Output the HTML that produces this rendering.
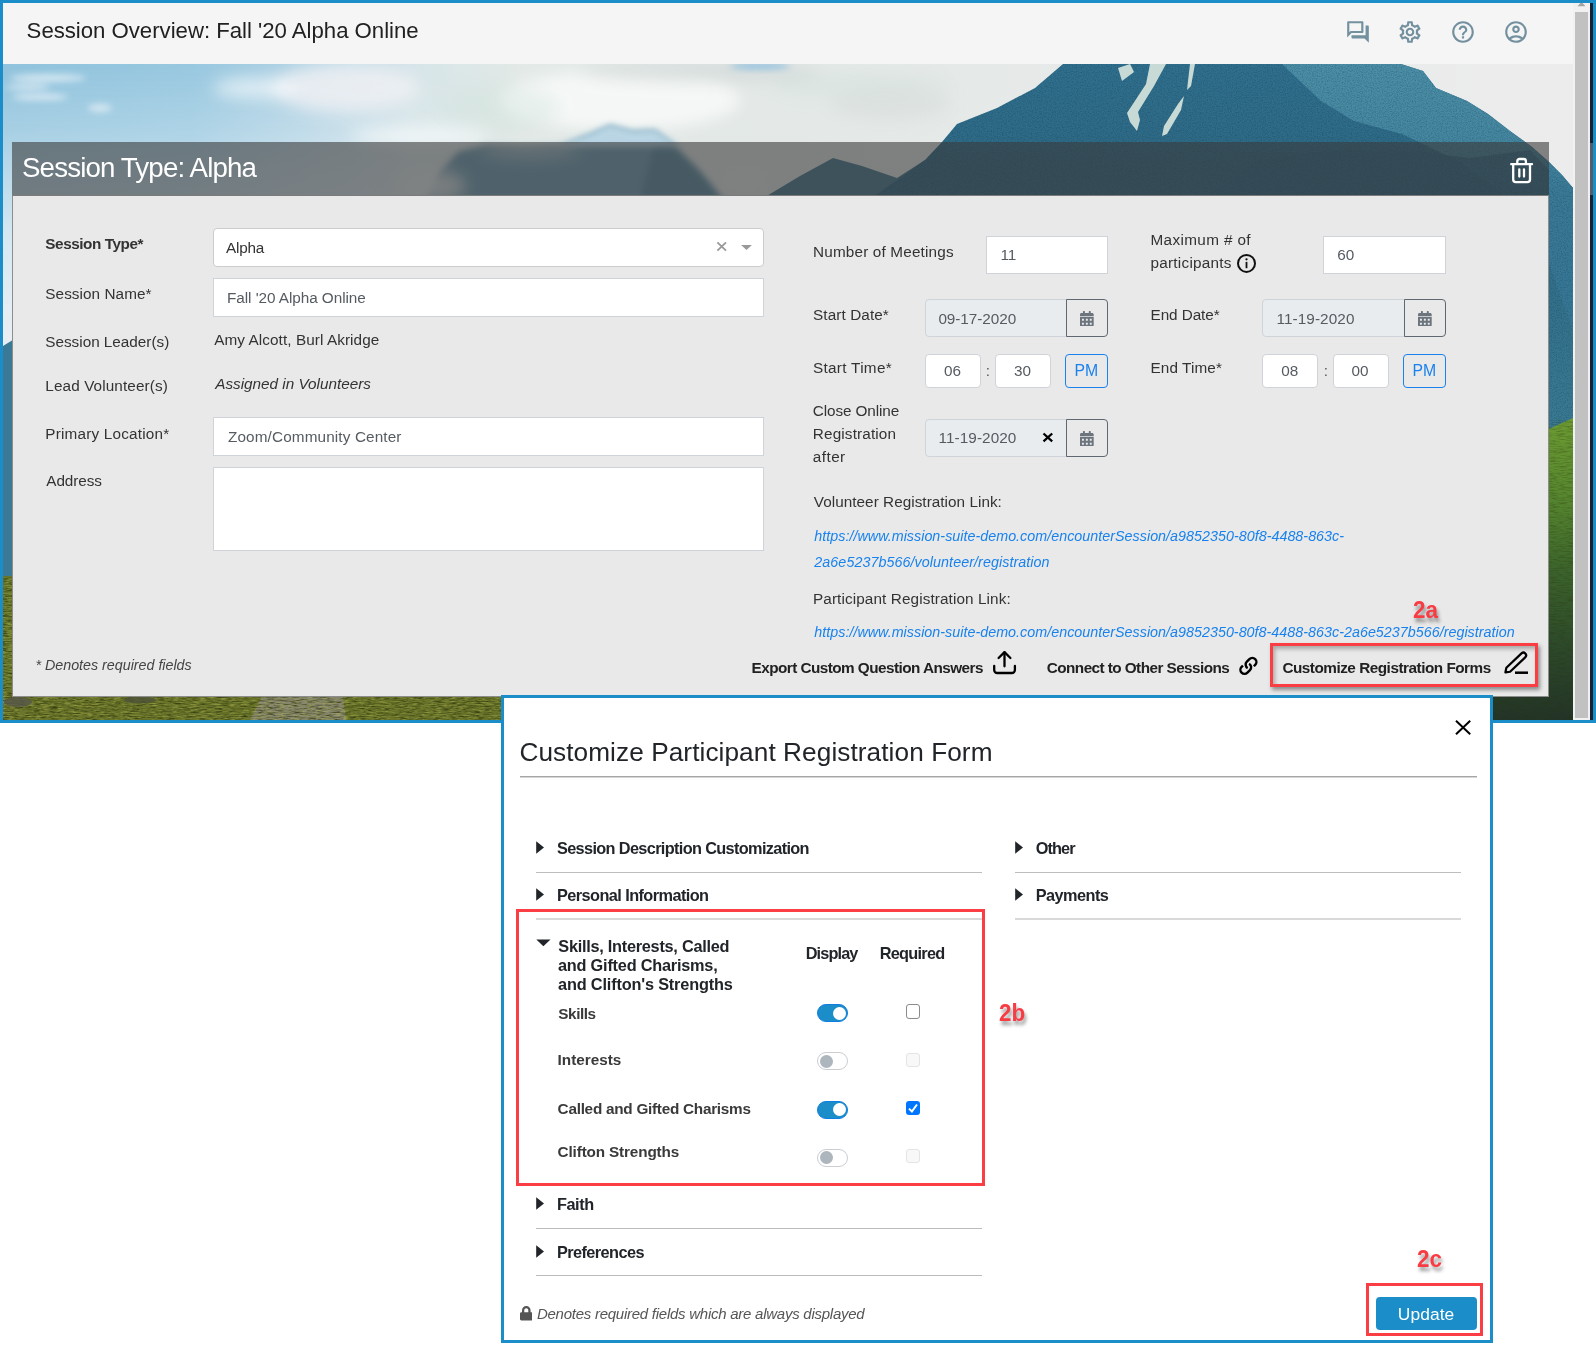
<!DOCTYPE html>
<html lang="en">
<head>
<meta charset="utf-8">
<title>Session Overview: Fall '20 Alpha Online</title>
<style>
html,body{margin:0;padding:0}
body{width:1596px;height:1347px;position:relative;overflow:hidden;background:#fff;font-family:"Liberation Sans",sans-serif}
.a,.t,.bx,svg.i{position:absolute}
.t{white-space:nowrap;line-height:normal;margin:0}
.ann{text-shadow:2px 4px 4px rgba(0,0,0,.4);transform:scaleX(.92);transform-origin:0 0}
.bx{box-sizing:border-box;background:#fff;border:1px solid #ced4da;border-radius:4px}
.sq{border-radius:0}
.ro{background:#e9ecef;border-radius:4px 0 0 4px}
.cal{background:transparent;border:1px solid #5f6870;border-radius:0 4px 4px 0}
.pm{background:transparent;border:1px solid #1a82ee;border-radius:4px}
.red{position:absolute;box-sizing:border-box;border:3px solid #fb3e43;box-shadow:2px 3px 4px rgba(0,0,0,.4), inset 2px 3px 4px rgba(0,0,0,.28)}
.hr{position:absolute;height:1px;background:#bdbdbd}
.tg{position:absolute;box-sizing:border-box;width:31px;height:18px;border-radius:9px}
.tg.on{background:#1b8dc9;border:1px solid #0f7ee2}
.tg.off{background:#fff;border:1px solid #c9ced3}
.tg i{position:absolute;width:13px;height:13px;border-radius:50%;top:1.5px}
.tg.on i{background:#fff;right:1.5px}
.tg.off i{background:#adb5bd;left:1.5px}
.cb{position:absolute;box-sizing:border-box;width:14.4px;height:14.4px;border-radius:3px}
</style>
</head>
<body>

<!-- ================= main application window ================= -->
<div class="a" id="win" style="left:0;top:0;width:1596px;height:723px;background:#1b8dc9"></div>
<div class="a" id="winfoot" style="left:0;top:720px;width:505px;height:3px;background:#1b8dc9"></div>
<div class="a" style="left:1590px;top:3px;width:3px;height:717px;background:#16222f"></div>
<div class="a" style="left:1590px;top:143px;width:3px;height:52px;background:#4f5d6c"></div>

<!-- background photo (mountain landscape) approximated with vector shapes -->
<svg class="i" id="photo" style="left:3px;top:64px" width="1570" height="656" viewBox="3 64 1570 656" preserveAspectRatio="none">
<defs>
<linearGradient id="skyh" x1="3" x2="1573" y1="0" y2="0" gradientUnits="userSpaceOnUse">
<stop offset="0" stop-color="#90c3dd"/><stop offset=".12" stop-color="#98c8e0"/><stop offset=".19" stop-color="#b0d2e4"/><stop offset=".26" stop-color="#d6e5e9"/><stop offset=".33" stop-color="#e2e9e6"/><stop offset=".6" stop-color="#e5e9e8"/><stop offset="1" stop-color="#ececec"/>
</linearGradient>
<linearGradient id="skyv" x1="0" x2="0" y1="64" y2="350" gradientUnits="userSpaceOnUse">
<stop offset="0" stop-color="#fff" stop-opacity="0"/><stop offset=".22" stop-color="#fff" stop-opacity=".2"/><stop offset=".6" stop-color="#fff" stop-opacity=".62"/><stop offset="1" stop-color="#f2f2f4" stop-opacity=".92"/>
</linearGradient>
<linearGradient id="fadeh" x1="3" x2="520" y1="0" y2="0" gradientUnits="userSpaceOnUse">
<stop offset="0" stop-color="#fff"/><stop offset=".6" stop-color="#fff"/><stop offset="1" stop-color="#000"/>
</linearGradient>
<mask id="mleft" maskUnits="userSpaceOnUse" x="3" y="64" width="520" height="300"><rect x="3" y="64" width="520" height="300" fill="url(#fadeh)"/></mask>
<linearGradient id="mtn" x1="0" x2="0" y1="64" y2="430" gradientUnits="userSpaceOnUse">
<stop offset="0" stop-color="#30708e"/><stop offset=".3" stop-color="#2e6985"/><stop offset="1" stop-color="#3a7a93"/>
</linearGradient>
<linearGradient id="ridge" x1="0" x2="0" y1="64" y2="300" gradientUnits="userSpaceOnUse">
<stop offset="0" stop-color="#4c8fa7"/><stop offset=".3" stop-color="#4688a1"/><stop offset=".55" stop-color="#3a7a97"/><stop offset="1" stop-color="#377796"/>
</linearGradient>
<linearGradient id="slope" x1="0" x2="0" y1="418" y2="720" gradientUnits="userSpaceOnUse">
<stop offset="0" stop-color="#6d9c33"/><stop offset=".28" stop-color="#55852f"/><stop offset=".5" stop-color="#3c642c"/><stop offset=".75" stop-color="#2d4a2b"/><stop offset="1" stop-color="#233428"/>
</linearGradient>
<filter id="bl8" x="-20%" y="-50%" width="140%" height="200%"><feGaussianBlur stdDeviation="8"/></filter>
<filter id="bl3" x="-20%" y="-50%" width="140%" height="200%"><feGaussianBlur stdDeviation="3"/></filter>
<filter id="bl1" x="-5%" y="-5%" width="110%" height="110%"><feGaussianBlur stdDeviation="0.7"/></filter>
<filter id="gdark" x="0" y="0" width="100%" height="100%" color-interpolation-filters="sRGB"><feTurbulence type="fractalNoise" baseFrequency=".12 .8" numOctaves="3" seed="7"/><feColorMatrix type="matrix" values="0 0 0 0 .16  0 0 0 0 .2  0 0 0 0 .04  2.4 0 0 0 -1.0"/></filter>
<filter id="glight" x="0" y="0" width="100%" height="100%" color-interpolation-filters="sRGB"><feTurbulence type="fractalNoise" baseFrequency=".14 .9" numOctaves="3" seed="23"/><feColorMatrix type="matrix" values="0 0 0 0 .72  0 0 0 0 .74  0 0 0 0 .34  0 2.6 0 0 -1.15"/></filter>
<filter id="gmtn" x="0" y="0" width="100%" height="100%" color-interpolation-filters="sRGB"><feTurbulence type="fractalNoise" baseFrequency=".8" numOctaves="2" seed="11"/><feColorMatrix type="matrix" values="0 0 0 0 .05  0 0 0 0 .18  0 0 0 0 .25  1.2 0 0 0 -.48"/></filter>
<clipPath id="cmtn"><path d="M873 197 L900 178 L925 160 L942 142 L957 124 L997 108 L1035 88 L1063 64 L1401 64 L1423 71 L1436 88 L1467 101 L1488 114 L1510 131 L1532 147 L1549 162 L1562 175 L1573 188 L1573 440 L1540 440 L1540 197Z"/></clipPath>
</defs>
<rect x="3" y="64" width="1570" height="656" fill="url(#skyh)"/>
<rect x="3" y="64" width="520" height="300" fill="url(#skyv)" mask="url(#mleft)"/>
<!-- clouds -->
<g filter="url(#bl8)" fill="#fff">
<ellipse cx="345" cy="88" rx="75" ry="24" opacity=".85" fill="#eef0f3"/>
<ellipse cx="255" cy="88" rx="42" ry="10" opacity=".6"/>
<ellipse cx="420" cy="136" rx="70" ry="9" opacity=".6"/>
<ellipse cx="620" cy="100" rx="120" ry="30" opacity=".65"/>
<ellipse cx="860" cy="86" rx="90" ry="14" opacity=".35" fill="#cfe0da"/>
<ellipse cx="700" cy="72" rx="120" ry="10" opacity=".6" fill="#ccd4d4"/>
<ellipse cx="890" cy="104" rx="60" ry="16" opacity=".45" fill="#d2d9d7"/>
<ellipse cx="500" cy="108" rx="60" ry="22" opacity=".35" fill="#cde2da"/>
</g>
<g filter="url(#bl3)" fill="#e4eff6" opacity=".75">
<ellipse cx="48" cy="78" rx="38" ry="4"/><ellipse cx="40" cy="97" rx="28" ry="3.5"/><ellipse cx="100" cy="108" rx="12" ry="4"/><ellipse cx="28" cy="87" rx="22" ry="3"/>
</g>
<ellipse cx="760" cy="66" rx="30" ry="4" fill="#8fbfdf" filter="url(#bl3)" opacity=".8"/>
<!-- distant ridges behind the panel header -->
<g filter="url(#bl3)"><path d="M424 200 L440 172 L458 152 L486 145 L520 146 L560 145 L590 134 L610 125 L632 131 L655 130 L672 143 L700 171 L724 200Z" fill="#6e9db4"/>
<path d="M640 200 L655 140 L672 143 L700 171 L724 200Z" fill="#5a8ba3"/></g>
<path d="M556 147 L590 134 L610 125 L632 131 L655 130 L680 147Z" fill="#c2dcea" filter="url(#bl3)" opacity=".9"/>
<g filter="url(#bl8)" fill="#e9eeee"><ellipse cx="432" cy="186" rx="34" ry="16" opacity=".85"/><ellipse cx="530" cy="150" rx="50" ry="8" opacity=".5"/><ellipse cx="745" cy="180" rx="22" ry="14" opacity=".5"/></g>
<path d="M765 197 L800 176 L833 158 L862 166 L897 178 L925 160 L925 197Z" fill="#44768c"/>
<!-- main mountain -->
<path d="M873 197 L900 178 L925 160 L942 142 L957 124 L997 108 L1035 88 L1063 64 L1401 64 L1423 71 L1436 88 L1467 101 L1488 114 L1510 131 L1532 147 L1549 162 L1562 175 L1573 188 L1573 440 L1540 440 L1540 197Z" fill="url(#mtn)"/>
<path d="M1282 64 L1401 64 L1423 71 L1436 88 L1467 101 L1488 114 L1510 131 L1532 147 L1549 162 L1562 175 L1573 188 L1573 330 L1548 262 L1500 192 L1460 162 L1419 142 L1402 134 L1354 121 L1321 101Z" fill="url(#ridge)"/>
<path d="M1205 197 L1260 160 L1330 150 L1420 152 L1470 158 L1530 150 L1549 170 L1549 197Z" fill="#2c6683" opacity=".8"/>
<rect x="873" y="64" width="700" height="380" filter="url(#gmtn)" clip-path="url(#cmtn)" opacity=".5"/>
<!-- snow -->
<g fill="#c8dad6">
<path d="M1118 68 L1130 64 L1134 72 L1122 81Z"/>
<path d="M1150 64 L1166 64 L1154 86 L1138 112 L1140 120 L1137 131 L1130 122 L1127 113 L1146 84Z"/>
<path d="M1190 64 L1195 64 L1191 86 L1187 90Z"/>
<path d="M1184 96 L1181 110 L1167 134 L1162 136 L1164 126 L1178 104Z"/>
</g>
<!-- green slope (right edge) -->
<path d="M1540 433 L1573 418 L1573 720 L1490 720 L1490 690 L1540 690Z" fill="url(#slope)"/>
<rect x="1490" y="420" width="83" height="300" filter="url(#gdark)" opacity=".35"/>
<!-- left edge : far mountain + meadow -->
<path d="M3 346 L16 338 L16 582 L3 578Z" fill="#3a7a96"/>
<rect x="3" y="576" width="13" height="144" fill="#66772b"/>
<!-- meadow (bottom edge) -->
<rect x="3" y="690" width="502" height="30" fill="#687228"/>
<path d="M262 696 L343 696 L346 720 L250 720Z" fill="#86856c"/>
<rect x="3" y="576" width="502" height="144" filter="url(#gdark)" opacity=".8"/>
<rect x="3" y="576" width="502" height="144" filter="url(#glight)" opacity=".5"/>
<ellipse cx="18" cy="702" rx="14" ry="5" fill="#56564a" opacity=".8"/>
<ellipse cx="140" cy="700" rx="16" ry="3.500" fill="#4d5238" opacity=".8"/>
</svg>


<!-- top bar -->
<div class="a" id="topbar" style="left:3px;top:3px;width:1570px;height:61px;background:#f5f5f5"></div>

<!-- scrollbar -->
<div class="a" style="left:1573px;top:3px;width:17px;height:717px;background:#f1f1f1"></div>
<div class="a" style="left:1575px;top:12px;width:13px;height:706px;background:#c1c1c1"></div>
<svg class="i" style="left:1577px;top:3px" width="9" height="4" viewBox="0 0 9 4"><path d="M0.5 3.2 L3.5 0 h2 L8.500 3.2z" fill="#a3a3a3"/></svg>

<!-- top bar icons (material outlined) -->
<svg class="i" style="left:1344.500px;top:19px" width="26" height="26" viewBox="0 0 24 24" fill="#73909f"><path d="M15 4v7H5.170L4 12.170V4h11m1-2H3c-.55 0-1 .45-1 1v14l4-4h10c.55 0 1-.45 1-1V3c0-.55-.45-1-1-1zm5 4h-2v9H6v2c0 .55.450 1 1 1h11l4 4V7c0-.55-.450-1-1-1z"/></svg>
<svg class="i" style="left:1397px;top:19px" width="26" height="26" viewBox="0 0 24 24" fill="#73909f"><path d="M19.430 12.980c.04-.32.070-.64.070-.98 0-.34-.03-.66-.07-.98l2.110-1.650c.19-.15.240-.42.120-.64l-2-3.460c-.09-.16-.26-.25-.44-.25-.06 0-.12.010-.17.030l-2.490 1c-.52-.4-1.080-.73-1.690-.98l-.38-2.650C14.460 2.180 14.250 2 14 2h-4c-.25 0-.46.180-.49.420l-.38 2.650c-.61.250-1.170.59-1.690.98l-2.490-1c-.06-.02-.12-.03-.18-.03-.17 0-.34.090-.43.250l-2 3.460c-.13.220-.07.490.12.640l2.110 1.650c-.04.320-.07.650-.07.980 0 .33.030.66.070.98l-2.110 1.650c-.19.150-.24.420-.12.640l2 3.460c.09.160.26.250.44.250.06 0 .12-.01.17-.03l2.490-1c.52.400 1.080.730 1.690.980l.38 2.650c.03.240.24.420.49.420h4c.25 0 .46-.18.490-.42l.38-2.650c.61-.25 1.170-.59 1.690-.98l2.490 1c.06.020.12.030.18.030.17 0 .34-.09.430-.25l2-3.460c.12-.22.070-.49-.12-.64l-2.110-1.650zm-1.980-1.710c.04.310.05.520.05.730 0 .21-.02.430-.05.730l-.14 1.130.89.700 1.080.84-.7 1.210-1.270-.51-1.040-.42-.9.680c-.43.320-.84.560-1.250.73l-1.060.43-.16 1.130-.2 1.350h-1.400l-.19-1.350-.16-1.130-1.060-.43c-.43-.18-.83-.41-1.230-.71l-.91-.7-1.060.43-1.270.51-.7-1.210 1.080-.84.890-.7-.14-1.130c-.03-.31-.05-.54-.05-.74s.02-.43.050-.73l.14-1.130-.89-.7-1.080-.84.700-1.210 1.270.51 1.040.42.900-.68c.43-.32.840-.56 1.250-.73l1.060-.43.160-1.130.2-1.350h1.390l.19 1.350.16 1.130 1.060.43c.43.180.83.410 1.230.71l.91.700 1.060-.43 1.270-.51.700 1.210-1.070.85-.89.700.14 1.130zM12 8c-2.210 0-4 1.790-4 4s1.790 4 4 4 4-1.790 4-4-1.790-4-4-4zm0 6c-1.100 0-2-.9-2-2s.9-2 2-2 2 .9 2 2-.9 2-2 2z"/></svg>
<svg class="i" style="left:1450px;top:19px" width="26" height="26" viewBox="0 0 24 24" fill="#73909f"><path d="M11 18h2v-2h-2v2zm1-16C6.480 2 2 6.480 2 12s4.480 10 10 10 10-4.480 10-10S17.520 2 12 2zm0 18c-4.410 0-8-3.590-8-8s3.590-8 8-8 8 3.590 8 8-3.590 8-8 8zm0-14c-2.210 0-4 1.790-4 4h2c0-1.100.9-2 2-2s2 .9 2 2c0 2-3 1.750-3 5h2c0-2.250 3-2.500 3-5 0-2.210-1.790-4-4-4z"/></svg>
<svg class="i" style="left:1503px;top:19px" width="26" height="26" viewBox="0 0 24 24" fill="#73909f"><path d="M12 2C6.480 2 2 6.480 2 12s4.480 10 10 10 10-4.480 10-10S17.520 2 12 2zM7.350 18.500C8.660 17.560 10.260 17 12 17s3.340.56 4.650 1.500C15.340 19.440 13.740 20 12 20s-3.340-.56-4.650-1.500zm10.790-1.380C16.450 15.800 14.320 15 12 15s-4.450.8-6.140 2.120C4.700 15.730 4 13.950 4 12c0-4.420 3.580-8 8-8s8 3.580 8 8c0 1.950-.7 3.730-1.860 5.120zM12 6c-1.930 0-3.500 1.570-3.500 3.500S10.070 13 12 13s3.500-1.570 3.500-3.500S13.930 6 12 6zm0 5c-.83 0-1.500-.67-1.500-1.500S11.170 8 12 8s1.500.67 1.500 1.500S12.830 11 12 11z"/></svg>


<!-- panel -->
<div class="a" id="panelhead" style="left:12px;top:142px;width:1537px;height:54px;background:rgba(58,58,58,.6)"></div>
<div class="a" id="panelbody" style="left:12px;top:195px;width:1537px;height:502px;background:#e9e9e9;box-sizing:border-box;border:1px solid #8d8d8d;border-top:1px solid #7b7b7b"></div>

<!-- delete icon -->
<svg class="i" style="left:1506px;top:154px" width="32" height="34" viewBox="1506 154 32 34" fill="none" stroke="#fff" stroke-width="2.300" stroke-linecap="round" stroke-linejoin="round"><path d="M1511.200 164.200 H1532"/><path d="M1517.300 163.500 v-2.300 a2.200 2.200 0 0 1 2.200 -2.200 h4.200 a2.200 2.200 0 0 1 2.200 2.200 v2.300"/><path d="M1513.200 164.500 V179.600 a2.600 2.600 0 0 0 2.600 2.600 h11.600 a2.600 2.600 0 0 0 2.600 -2.600 V164.500"/><path d="M1519.300 169.300 V176.600 M1524 169.300 V176.600"/></svg>
<!-- form controls : left column -->
<div class="bx" style="left:213px;top:228px;width:551px;height:39px;border-color:#ccc"></div>
<svg class="i" style="left:715px;top:240px" width="14" height="13" viewBox="0 0 14 13"><path d="M2.4 2.3 L11 10.6 M11 2.3 L2.4 10.6" stroke="#999" stroke-width="1.8" fill="none"/></svg>
<svg class="i" style="left:740px;top:243px" width="14" height="8" viewBox="0 0 14 8"><path d="M1.1 2.1 h10.8 l-5.4 4.9z" fill="#999"/></svg>
<div class="bx sq" style="left:213px;top:278px;width:551px;height:39px"></div>
<div class="bx sq" style="left:213px;top:417px;width:551px;height:39px"></div>
<div class="bx sq" style="left:213px;top:467px;width:551px;height:84px"></div>

<!-- form controls : right column -->
<div class="bx sq" style="left:986px;top:236px;width:122px;height:38px"></div>
<div class="bx sq" style="left:1323px;top:236px;width:123px;height:38px"></div>

<div class="bx ro" style="left:925px;top:299px;width:142px;height:38px"></div>
<div class="bx cal" style="left:1066px;top:299px;width:42px;height:38px"></div>
<div class="bx ro" style="left:1262px;top:299px;width:143px;height:38px"></div>
<div class="bx cal" style="left:1404px;top:299px;width:42px;height:38px"></div>

<div class="bx" style="left:925px;top:354px;width:56px;height:34px"></div>
<div class="bx" style="left:995px;top:354px;width:56px;height:34px"></div>
<div class="bx pm" style="left:1065px;top:354px;width:43px;height:34px"></div>
<div class="bx" style="left:1262px;top:354px;width:56px;height:34px"></div>
<div class="bx" style="left:1333px;top:354px;width:56px;height:34px"></div>
<div class="bx pm" style="left:1403px;top:354px;width:43px;height:34px"></div>

<div class="bx ro" style="left:925px;top:419px;width:142px;height:38px"></div>
<div class="bx cal" style="left:1066px;top:419px;width:42px;height:38px"></div>
<svg class="i" style="left:1041px;top:431px" width="14" height="13" viewBox="0 0 14 13"><path d="M2.5 2.5 L11.2 10.300 M11.2 2.5 L2.5 10.300" stroke="#000" stroke-width="2.3" fill="none"/></svg>

<!-- calendar icons -->
<svg class="i" style="left:1080.2px;top:310.6px" width="13.7" height="15.66" viewBox="0 0 448 512"><path fill="#6c757d" d="M0 464c0 26.500 21.500 48 48 48h352c26.500 0 48-21.500 48-48V192H0v272zm320-196c0-6.600 5.400-12 12-12h40c6.600 0 12 5.400 12 12v40c0 6.600-5.400 12-12 12h-40c-6.600 0-12-5.400-12-12v-40zm0 128c0-6.600 5.400-12 12-12h40c6.600 0 12 5.400 12 12v40c0 6.600-5.400 12-12 12h-40c-6.600 0-12-5.400-12-12v-40zM192 268c0-6.600 5.400-12 12-12h40c6.600 0 12 5.400 12 12v40c0 6.600-5.400 12-12 12h-40c-6.600 0-12-5.400-12-12v-40zm0 128c0-6.600 5.400-12 12-12h40c6.600 0 12 5.400 12 12v40c0 6.600-5.400 12-12 12h-40c-6.600 0-12-5.400-12-12v-40zM64 268c0-6.600 5.400-12 12-12h40c6.600 0 12 5.400 12 12v40c0 6.600-5.400 12-12 12H76c-6.600 0-12-5.400-12-12v-40zm0 128c0-6.600 5.400-12 12-12h40c6.600 0 12 5.400 12 12v40c0 6.600-5.400 12-12 12H76c-6.600 0-12-5.400-12-12v-40zM400 64h-48V16c0-8.800-7.200-16-16-16h-32c-8.800 0-16 7.200-16 16v48H160V16c0-8.800-7.200-16-16-16h-32c-8.800 0-16 7.200-16 16v48H48C21.500 64 0 85.500 0 112v48h448v-48c0-26.500-21.500-48-48-48z"/></svg>
<svg class="i" style="left:1418px;top:310.6px" width="13.7" height="15.66" viewBox="0 0 448 512"><path fill="#6c757d" d="M0 464c0 26.500 21.500 48 48 48h352c26.500 0 48-21.500 48-48V192H0v272zm320-196c0-6.600 5.400-12 12-12h40c6.600 0 12 5.400 12 12v40c0 6.600-5.400 12-12 12h-40c-6.600 0-12-5.400-12-12v-40zm0 128c0-6.600 5.400-12 12-12h40c6.600 0 12 5.400 12 12v40c0 6.600-5.400 12-12 12h-40c-6.600 0-12-5.400-12-12v-40zM192 268c0-6.600 5.400-12 12-12h40c6.600 0 12 5.400 12 12v40c0 6.600-5.400 12-12 12h-40c-6.600 0-12-5.400-12-12v-40zm0 128c0-6.600 5.400-12 12-12h40c6.600 0 12 5.400 12 12v40c0 6.600-5.400 12-12 12h-40c-6.600 0-12-5.400-12-12v-40zM64 268c0-6.600 5.400-12 12-12h40c6.600 0 12 5.400 12 12v40c0 6.600-5.400 12-12 12H76c-6.600 0-12-5.400-12-12v-40zm0 128c0-6.600 5.400-12 12-12h40c6.600 0 12 5.400 12 12v40c0 6.600-5.400 12-12 12H76c-6.600 0-12-5.400-12-12v-40zM400 64h-48V16c0-8.800-7.200-16-16-16h-32c-8.800 0-16 7.200-16 16v48H160V16c0-8.800-7.200-16-16-16h-32c-8.800 0-16 7.200-16 16v48H48C21.500 64 0 85.500 0 112v48h448v-48c0-26.500-21.500-48-48-48z"/></svg>
<svg class="i" style="left:1080.2px;top:430.6px" width="13.7" height="15.66" viewBox="0 0 448 512"><path fill="#6c757d" d="M0 464c0 26.500 21.500 48 48 48h352c26.500 0 48-21.500 48-48V192H0v272zm320-196c0-6.600 5.400-12 12-12h40c6.600 0 12 5.400 12 12v40c0 6.600-5.400 12-12 12h-40c-6.600 0-12-5.400-12-12v-40zm0 128c0-6.600 5.400-12 12-12h40c6.600 0 12 5.400 12 12v40c0 6.600-5.400 12-12 12h-40c-6.600 0-12-5.400-12-12v-40zM192 268c0-6.600 5.400-12 12-12h40c6.600 0 12 5.400 12 12v40c0 6.600-5.400 12-12 12h-40c-6.600 0-12-5.400-12-12v-40zm0 128c0-6.600 5.400-12 12-12h40c6.600 0 12 5.400 12 12v40c0 6.600-5.400 12-12 12h-40c-6.600 0-12-5.400-12-12v-40zM64 268c0-6.600 5.400-12 12-12h40c6.600 0 12 5.400 12 12v40c0 6.600-5.400 12-12 12H76c-6.600 0-12-5.400-12-12v-40zm0 128c0-6.600 5.400-12 12-12h40c6.600 0 12 5.400 12 12v40c0 6.600-5.400 12-12 12H76c-6.600 0-12-5.400-12-12v-40zM400 64h-48V16c0-8.800-7.200-16-16-16h-32c-8.800 0-16 7.200-16 16v48H160V16c0-8.800-7.200-16-16-16h-32c-8.800 0-16 7.200-16 16v48H48C21.500 64 0 85.500 0 112v48h448v-48c0-26.500-21.500-48-48-48z"/></svg>

<!-- info icon -->
<svg class="i" style="left:1236px;top:253px" width="21" height="21" viewBox="0 0 21 21"><circle cx="10.5" cy="10.4" r="8.5" fill="none" stroke="#111" stroke-width="2"/><circle cx="10.5" cy="6.300" r="1.15" fill="#111"/><rect x="9.600" y="8.900" width="1.800" height="6.300" fill="#111"/></svg>

<!-- footer action icons -->
<svg class="i" style="left:990px;top:648px" width="30" height="30" viewBox="990 648 30 30" fill="none" stroke="#000" stroke-width="2.3" stroke-linecap="round" stroke-linejoin="round"><path d="M994.2 666 v4 a3 3 0 0 0 3 3 h14.7 a3 3 0 0 0 3-3 v-4"/><path d="M1004.5 666.3 V652.5"/><path d="M998.6 658 L1004.5 652.1 L1010.4 658"/></svg>
<svg class="i" style="left:1235px;top:653px" width="26" height="26" viewBox="-13 -13 26 26" fill="none" stroke="#000" stroke-width="2.4" stroke-linecap="butt"><g transform="translate(0.4,-0.1) rotate(-45)"><path d="M-3.6 -4.1 L-5.5 -4.1 A4.1 4.1 0 0 0 -5.5 4.1 L-1.9 4.1 A4.1 4.1 0 0 0 2.06 -1.06"/><path d="M3.6 4.1 L5.5 4.1 A4.1 4.1 0 0 0 5.5 -4.1 L1.9 -4.1 A4.1 4.1 0 0 0 -2.06 1.06"/></g></svg>
<svg class="i" style="left:1500px;top:648px" width="32" height="32" viewBox="1500 648 32 32" fill="none" stroke="#000" stroke-linejoin="round" stroke-linecap="butt"><g transform="translate(1504.8,673) rotate(-43.5)"><path d="M0.8 0 L4.7 -2.7 L25.6 -2.7 A2.7 2.7 0 0 1 25.6 2.7 L4.7 2.7 Z" stroke-width="2.2"/></g><path d="M1515 672.7 H1528" stroke-width="2.5"/></svg>

<!-- annotation 2a -->
<div class="red" style="left:1270px;top:643px;width:268px;height:44px"></div>


<div class="a" id="wintext" style="left:0;top:0;width:1596px;height:723px;will-change:transform">
<div class="t" style="left:26.6px;top:18px;font-size:22.2px;color:#212121;letter-spacing:-0.017px;">Session Overview: Fall &#x27;20 Alpha Online</div>
<div class="t" style="left:22px;top:152px;font-size:27.7px;color:#ffffff;letter-spacing:-0.856px;">Session Type: Alpha</div>
<div class="t" style="left:45.3px;top:235px;font-size:15.3px;color:#333;font-weight:700;letter-spacing:-0.433px;">Session Type*</div>
<div class="t" style="left:45.3px;top:285px;font-size:15.3px;color:#333;letter-spacing:0.066px;">Session Name*</div>
<div class="t" style="left:45.3px;top:333px;font-size:15.3px;color:#333;letter-spacing:-0.013px;">Session Leader(s)</div>
<div class="t" style="left:45.3px;top:377px;font-size:15.3px;color:#333;letter-spacing:0.112px;">Lead Volunteer(s)</div>
<div class="t" style="left:45.3px;top:425px;font-size:15.3px;color:#333;letter-spacing:0.2px;">Primary Location*</div>
<div class="t" style="left:46.3px;top:472px;font-size:15.3px;color:#333;letter-spacing:-0.068px;">Address</div>
<div class="t" style="left:226px;top:239px;font-size:15.3px;color:#333;letter-spacing:-0.2px;">Alpha</div>
<div class="t" style="left:227px;top:289px;font-size:15.3px;color:#555b61;letter-spacing:-0.05px;">Fall &#x27;20 Alpha Online</div>
<div class="t" style="left:214.2px;top:331px;font-size:15.3px;color:#333;letter-spacing:0.079px;">Amy Alcott, Burl Akridge</div>
<div class="t" style="left:215.2px;top:375px;font-size:15.3px;color:#333;font-style:italic;letter-spacing:-0.009px;">Assigned in Volunteers</div>
<div class="t" style="left:228px;top:428px;font-size:15.3px;color:#555b61;letter-spacing:0.13px;">Zoom/Community Center</div>
<div class="t" style="left:813px;top:243px;font-size:15.3px;color:#333;letter-spacing:0.165px;">Number of Meetings</div>
<div class="t" style="left:1000.5px;top:246px;font-size:15.3px;color:#555b61;">11</div>
<div class="t" style="left:1150.5px;top:231px;font-size:15.3px;color:#333;letter-spacing:0.364px;">Maximum # of</div>
<div class="t" style="left:1150.5px;top:254px;font-size:15.3px;color:#333;letter-spacing:0.254px;">participants</div>
<div class="t" style="left:1337.2px;top:246px;font-size:15.3px;color:#555b61;">60</div>
<div class="t" style="left:813px;top:306px;font-size:15.3px;color:#333;letter-spacing:0.1px;">Start Date*</div>
<div class="t" style="left:938.4px;top:310px;font-size:15.3px;color:#555b61;letter-spacing:-0.046px;">09-17-2020</div>
<div class="t" style="left:1150.5px;top:306px;font-size:15.3px;color:#333;letter-spacing:-0.077px;">End Date*</div>
<div class="t" style="left:1276.5px;top:310px;font-size:15.3px;color:#555b61;letter-spacing:0.088px;">11-19-2020</div>
<div class="t" style="left:813px;top:359px;font-size:15.3px;color:#333;letter-spacing:0.3px;">Start Time*</div>
<div class="t" style="left:944px;top:362px;font-size:15.3px;color:#555b61;">06</div>
<div class="t" style="left:985.8px;top:362px;font-size:15.3px;color:#555b61;">:</div>
<div class="t" style="left:1014px;top:362px;font-size:15.3px;color:#555b61;">30</div>
<div class="t" style="left:1074.5px;top:362px;font-size:15.8px;color:#1a82ee;">PM</div>
<div class="t" style="left:1150.5px;top:359px;font-size:15.3px;color:#333;letter-spacing:0.102px;">End Time*</div>
<div class="t" style="left:1281.3px;top:362px;font-size:15.3px;color:#555b61;">08</div>
<div class="t" style="left:1323.7px;top:362px;font-size:15.3px;color:#555b61;">:</div>
<div class="t" style="left:1351.5px;top:362px;font-size:15.3px;color:#555b61;">00</div>
<div class="t" style="left:1412.4px;top:362px;font-size:15.8px;color:#1a82ee;">PM</div>
<div class="t" style="left:812.8px;top:402px;font-size:15.3px;color:#333;letter-spacing:-0.108px;">Close Online</div>
<div class="t" style="left:812.8px;top:425px;font-size:15.3px;color:#333;letter-spacing:0.144px;">Registration</div>
<div class="t" style="left:812.8px;top:448px;font-size:15.3px;color:#333;letter-spacing:0.45px;">after</div>
<div class="t" style="left:938.6px;top:429px;font-size:15.3px;color:#555b61;letter-spacing:0.065px;">11-19-2020</div>
<div class="t" style="left:813.8px;top:493px;font-size:15.3px;color:#333;letter-spacing:0.037px;">Volunteer Registration Link:</div>
<div class="t" style="left:814.3px;top:528px;font-size:14.3px;color:#1782ee;font-style:italic;letter-spacing:0.027px;">https://www.mission-suite-demo.com/encounterSession/a9852350-80f8-4488-863c-</div>
<div class="t" style="left:814.3px;top:554px;font-size:14.3px;color:#1782ee;font-style:italic;letter-spacing:0.07px;">2a6e5237b566/volunteer/registration</div>
<div class="t" style="left:813px;top:590px;font-size:15.3px;color:#333;letter-spacing:0.103px;">Participant Registration Link:</div>
<div class="t" style="left:814.3px;top:624px;font-size:14.3px;color:#1782ee;font-style:italic;letter-spacing:0.026px;">https://www.mission-suite-demo.com/encounterSession/a9852350-80f8-4488-863c-2a6e5237b566/registration</div>
<div class="t" style="left:35.5px;top:657px;font-size:14.3px;color:#444;font-style:italic;letter-spacing:-0.016px;">* Denotes required fields</div>
<div class="t" style="left:751.5px;top:659px;font-size:15.3px;color:#212121;font-weight:700;letter-spacing:-0.538px;">Export Custom Question Answers</div>
<div class="t" style="left:1046.8px;top:659px;font-size:15.3px;color:#212121;font-weight:700;letter-spacing:-0.558px;">Connect to Other Sessions</div>
<div class="t" style="left:1282.4px;top:659px;font-size:15.3px;color:#212121;font-weight:700;letter-spacing:-0.482px;">Customize Registration Forms</div>
<div class="t ann" style="left:1412.8px;top:596px;font-size:24.4px;color:#f83c44;font-weight:700;">2a</div>
</div>

<!-- ================= modal ================= -->
<div class="a" id="modal" style="left:501px;top:695px;width:992px;height:648px;box-sizing:border-box;border:3px solid #1b8dc9;background:#fff"></div>

<!-- modal chrome -->
<svg class="i" style="left:1453px;top:718px" width="20" height="19" viewBox="1453 718 20 19"><path d="M1456 720.700 L1470.200 734.300 M1470.200 720.700 L1456 734.300" stroke="#000" stroke-width="2" fill="none"/></svg>
<div class="hr" style="left:520px;top:776px;width:957px;background:#a6a6a6"></div>
<div class="hr" style="left:520px;top:777px;width:957px;background:#d6d6d6"></div>

<!-- accordion separators -->
<div class="hr" style="left:536px;top:872px;width:446px"></div>
<div class="hr" style="left:536px;top:918px;width:446px;background:#d9d9d9;height:2px"></div>
<div class="hr" style="left:536px;top:1228px;width:446px"></div>
<div class="hr" style="left:536px;top:1275px;width:446px"></div>
<div class="hr" style="left:1015px;top:872px;width:446px"></div>
<div class="hr" style="left:1015px;top:918px;width:446px;background:#d9d9d9;height:2px"></div>

<!-- disclosure markers -->
<svg class="i" style="left:536px;top:841px" width="9" height="13" viewBox="0 0 9 13"><path d="M0.200 0.300 L8 6.500 L0.200 12.700z" fill="#212529"/></svg>
<svg class="i" style="left:536px;top:888px" width="9" height="13" viewBox="0 0 9 13"><path d="M0.200 0.300 L8 6.500 L0.200 12.700z" fill="#212529"/></svg>
<svg class="i" style="left:536px;top:938.500px" width="15" height="8" viewBox="0 0 15 8"><path d="M0.300 0.400 H14.500 L7.400 7.300z" fill="#212529"/></svg>
<svg class="i" style="left:536px;top:1197px" width="9" height="13" viewBox="0 0 9 13"><path d="M0.200 0.300 L8 6.500 L0.200 12.700z" fill="#212529"/></svg>
<svg class="i" style="left:536px;top:1244.500px" width="9" height="13" viewBox="0 0 9 13"><path d="M0.200 0.300 L8 6.500 L0.200 12.700z" fill="#212529"/></svg>
<svg class="i" style="left:1014.700px;top:841px" width="9" height="13" viewBox="0 0 9 13"><path d="M0.200 0.300 L8 6.500 L0.200 12.700z" fill="#212529"/></svg>
<svg class="i" style="left:1014.700px;top:888px" width="9" height="13" viewBox="0 0 9 13"><path d="M0.200 0.300 L8 6.500 L0.200 12.700z" fill="#212529"/></svg>

<!-- toggles + checkboxes -->
<div class="tg on" style="left:817.200px;top:1004.200px"><i></i></div>
<div class="tg off" style="left:817.200px;top:1052.200px"><i></i></div>
<div class="tg on" style="left:817.200px;top:1100.800px"><i></i></div>
<div class="tg off" style="left:817.200px;top:1148.700px"><i></i></div>
<div class="cb" style="left:905.600px;top:1004.300px;background:#fff;border:1px solid #8b8b8b"></div>
<div class="cb" style="left:905.600px;top:1052.600px;background:#f8f8f8;border:1px solid #e4e4e4"></div>
<div class="cb" style="left:905.600px;top:1100.700px;background:#0075ff"></div>
<svg class="i" style="left:905.600px;top:1100.700px" width="14.400" height="14.400" viewBox="0 0 14.400 14.400"><path d="M3 7.600 L5.900 10.500 L11 3.500" stroke="#fff" stroke-width="2" fill="none"/></svg>
<div class="cb" style="left:905.600px;top:1148.700px;background:#f8f8f8;border:1px solid #e4e4e4"></div>

<!-- lock -->
<svg class="i" style="left:519.600px;top:1306.200px" width="12.600" height="14.400" viewBox="0 0 448 512"><path fill="#555" d="M400 224h-24v-72C376 68.200 307.800 0 224 0S72 68.200 72 152v72H48c-26.500 0-48 21.500-48 48v192c0 26.500 21.500 48 48 48h352c26.500 0 48-21.500 48-48V272c0-26.500-21.500-48-48-48zm-104 0H152v-72c0-39.700 32.300-72 72-72s72 32.300 72 72v72z"/></svg>

<!-- update button -->
<div class="a" style="left:1375.700px;top:1297.300px;width:101.500px;height:32.800px;background:#1b8dc9;border-radius:4px"></div>

<!-- annotations 2b / 2c -->
<div class="red" style="left:516.200px;top:908.600px;width:469px;height:277.400px;box-shadow:none"></div>
<div class="red" style="left:1366.200px;top:1283px;width:117px;height:53.300px;box-shadow:none"></div>


<div class="a" id="modaltext" style="left:0;top:0;width:1596px;height:1347px;will-change:transform">
<div class="t" style="left:519.4px;top:737px;font-size:26.2px;color:#212529;letter-spacing:0.079px;">Customize Participant Registration Form</div>
<div class="t" style="left:557px;top:839px;font-size:16.3px;color:#212529;font-weight:700;letter-spacing:-0.645px;">Session Description Customization</div>
<div class="t" style="left:557px;top:886px;font-size:16.3px;color:#212529;font-weight:700;letter-spacing:-0.568px;">Personal Information</div>
<div class="t" style="left:558.3px;top:937px;font-size:16.3px;color:#212529;font-weight:700;letter-spacing:-0.259px;">Skills, Interests, Called</div>
<div class="t" style="left:558px;top:956px;font-size:16.3px;color:#212529;font-weight:700;letter-spacing:-0.211px;">and Gifted Charisms,</div>
<div class="t" style="left:558px;top:975px;font-size:16.3px;color:#212529;font-weight:700;letter-spacing:-0.164px;">and Clifton&#x27;s Strengths</div>
<div class="t" style="left:805.7px;top:944px;font-size:16.3px;color:#212529;font-weight:700;letter-spacing:-0.866px;">Display</div>
<div class="t" style="left:879.8px;top:944px;font-size:16.3px;color:#212529;font-weight:700;letter-spacing:-0.743px;">Required</div>
<div class="t" style="left:558.3px;top:1005px;font-size:15.3px;color:#3a3a3a;font-weight:700;letter-spacing:-0.44px;">Skills</div>
<div class="t" style="left:557.6px;top:1051px;font-size:15.3px;color:#3a3a3a;font-weight:700;">Interests</div>
<div class="t" style="left:557.6px;top:1100px;font-size:15.3px;color:#3a3a3a;font-weight:700;letter-spacing:-0.256px;">Called and Gifted Charisms</div>
<div class="t" style="left:557.6px;top:1143px;font-size:15.3px;color:#3a3a3a;font-weight:700;letter-spacing:-0.15px;">Clifton Strengths</div>
<div class="t ann" style="left:999.4px;top:999px;font-size:24.4px;color:#f83c44;font-weight:700;">2b</div>
<div class="t" style="left:556.9px;top:1195px;font-size:16.3px;color:#212529;font-weight:700;letter-spacing:-0.4px;">Faith</div>
<div class="t" style="left:556.9px;top:1243px;font-size:16.3px;color:#212529;font-weight:700;letter-spacing:-0.56px;">Preferences</div>
<div class="t" style="left:1035.7px;top:839px;font-size:16.3px;color:#212529;font-weight:700;letter-spacing:-0.9px;">Other</div>
<div class="t" style="left:1035.7px;top:886px;font-size:16.3px;color:#212529;font-weight:700;letter-spacing:-0.543px;">Payments</div>
<div class="t" style="left:536.9px;top:1305px;font-size:15px;color:#555;font-style:italic;letter-spacing:-0.253px;">Denotes required fields which are always displayed</div>
<div class="t ann" style="left:1416.5px;top:1245px;font-size:24.4px;color:#f83c44;font-weight:700;">2c</div>
<div class="t" style="left:1397.8px;top:1304px;font-size:17.4px;color:#ffffff;letter-spacing:0.08px;">Update</div>
</div>

</body>
</html>
